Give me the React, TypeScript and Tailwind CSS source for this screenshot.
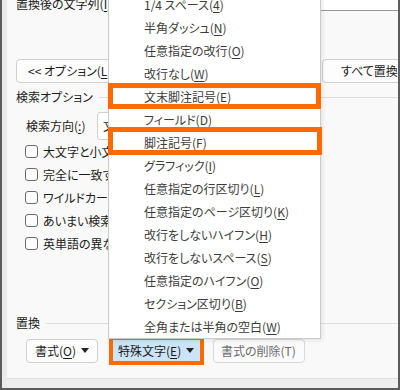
import React from 'react';

const font = "font-['Noto_Sans_CJK_JP',sans-serif] [font-feature-settings:'palt']";

function Key({ k }: { k: string }) {
  return (
    <>
      (<span className="underline underline-offset-2">{k}</span>)
    </>
  );
}

function Caret() {
  return (
    <svg width="8" height="5" viewBox="0 0 8 5" className="ml-[5px]">
      <path d="M0 0h8L4 5z" fill="#222" />
    </svg>
  );
}

const menuItems: [string, string][] = [
  ['1/4 スペース', '4'],
  ['半角ダッシュ', 'N'],
  ['任意指定の改行', 'O'],
  ['改行なし', 'W'],
  ['文末脚注記号', 'E'],
  ['フィールド', 'D'],
  ['脚注記号', 'F'],
  ['グラフィック', 'I'],
  ['任意指定の行区切り', 'L'],
  ['任意指定のページ区切り', 'K'],
  ['改行をしないハイフン', 'H'],
  ['改行をしないスペース', 'S'],
  ['任意指定のハイフン', 'O'],
  ['セクション区切り', 'B'],
  ['全角または半角の空白', 'W'],
];

const options = [
  '大文字と小文字を区別する(H)',
  '完全に一致する単語だけを検索する(Y)',
  'ワイルドカードを使用する(U)',
  'あいまい検索 (英)(K)',
  '英単語の異なる活用形も検索する(W)',
];

function GroupTitle({ title }: { title: string }) {
  return (
    <div className="flex items-center h-[16px] pl-[9px]">
      <span>{title}</span>
      <div className="flex-1 h-px bg-[#dedede] ml-[6px]" />
    </div>
  );
}

export default function App() {
  return (
    <div
      className={`relative w-[400px] h-[390px] overflow-hidden bg-[#5c5c5c] px-[2px] pb-[2px] text-[12px] text-[#1b1b1b] ${font}`}
    >
      <div className="flex h-full">
        <div className="w-[5px] bg-[#ebebeb]" />
        <div className="flex-1 flex flex-col bg-[#f9f9f9] overflow-hidden">
          {/* 置換後の文字列 */}
          <div className="flex items-start h-[24px] -mt-[13px]">
            <span className="pl-[9px] mt-[9px] leading-[16px] whitespace-nowrap">
              置換後の文字列<Key k="I" />:
            </span>
            <div className="flex-1 h-[24px] ml-[6px] bg-white border-b border-[#9a9a9a]" />
          </div>

          <div className="flex justify-between items-center mt-[48px] h-[24px]">
            <button className="ml-[9px] w-[112px] h-[24px] rounded-[4px] border border-[#d0d0d0] bg-[#fdfdfd] text-left pl-[11px] whitespace-nowrap">
              &lt;&lt; オプション<Key k="L" />
            </button>
            <button className="-mr-[24px] w-[100px] h-[24px] rounded-[4px] border border-[#d0d0d0] bg-[#fdfdfd] text-left pl-[18px] whitespace-nowrap">
              すべて置換<Key k="A" />
            </button>
          </div>

          <div className="mt-[6px]">
            <GroupTitle title="検索オプション" />
          </div>

          <div className="flex items-center mt-[7px] h-[28px] pl-[19px]">
            <span className="w-[71px] whitespace-nowrap">
              検索方向(<span className="underline underline-offset-2">:</span>)
            </span>
            <div className="w-[120px] h-[28px] rounded-[3px] border border-[#d0d0d0] bg-white pl-[5px] flex items-center">
              文書全体
            </div>
          </div>

          <div className="flex flex-col pl-[18px]">
            {options.map((o) => (
              <div key={o} className="flex items-center h-[23px] whitespace-nowrap">
                <div className="w-[13px] h-[13px] rounded-[3px] border border-[#6b6b6b] bg-[#fcfcfc]" />
                <span className="ml-[5px]">{o}</span>
              </div>
            ))}
          </div>

          <div className="mt-[60px]">
            <GroupTitle title="置換" />
          </div>

          <div className="flex items-center mt-[5px] h-[29px] pl-[19px]">
            <button className="w-[72px] h-[24px] rounded-[4px] border border-[#d0d0d0] bg-[#fdfdfd] flex items-center pl-[8px] whitespace-nowrap">
              書式<Key k="O" />
              <Caret />
            </button>
            <div className="ml-[11px] w-[95px] h-[29px] border-[4px] border-[#ff6a00] bg-[#cce4f7] flex items-center pl-[5px] whitespace-nowrap">
              特殊文字<Key k="E" />
              <Caret />
            </div>
            <button className="ml-[9px] w-[92px] h-[24px] rounded-[4px] border border-[#d8d8d8] bg-[#fbfbfb] text-[#6a6a6a] flex items-center pl-[7px] whitespace-nowrap">
              書式の削除(T)
            </button>
          </div>

          <div className="mt-auto h-[10px] border-t border-[#dedede] bg-[#efefef]" />
        </div>
      </div>

      {/* 特殊文字 menu */}
      <div className="absolute left-[108px] top-[-8px] w-[213px] border border-[#cacaca] bg-white shadow-[2px_2px_4px_rgba(0,0,0,0.08)] text-[#3c3c3c]">
        {menuItems.map(([label, k], i) => (
          <div key={i} className="h-[23px] flex items-center pl-[35px] whitespace-nowrap">
            {label}
            <Key k={k} />
          </div>
        ))}
      </div>

      {/* highlights */}
      <div className="absolute left-[108px] top-[83px] w-[213px] h-[26px] border-[5px] border-[#ff6a00]" />
      <div className="absolute left-[108px] top-[127px] w-[214px] h-[28px] border-[5px] border-[#ff6a00]" />
    </div>
  );
}
